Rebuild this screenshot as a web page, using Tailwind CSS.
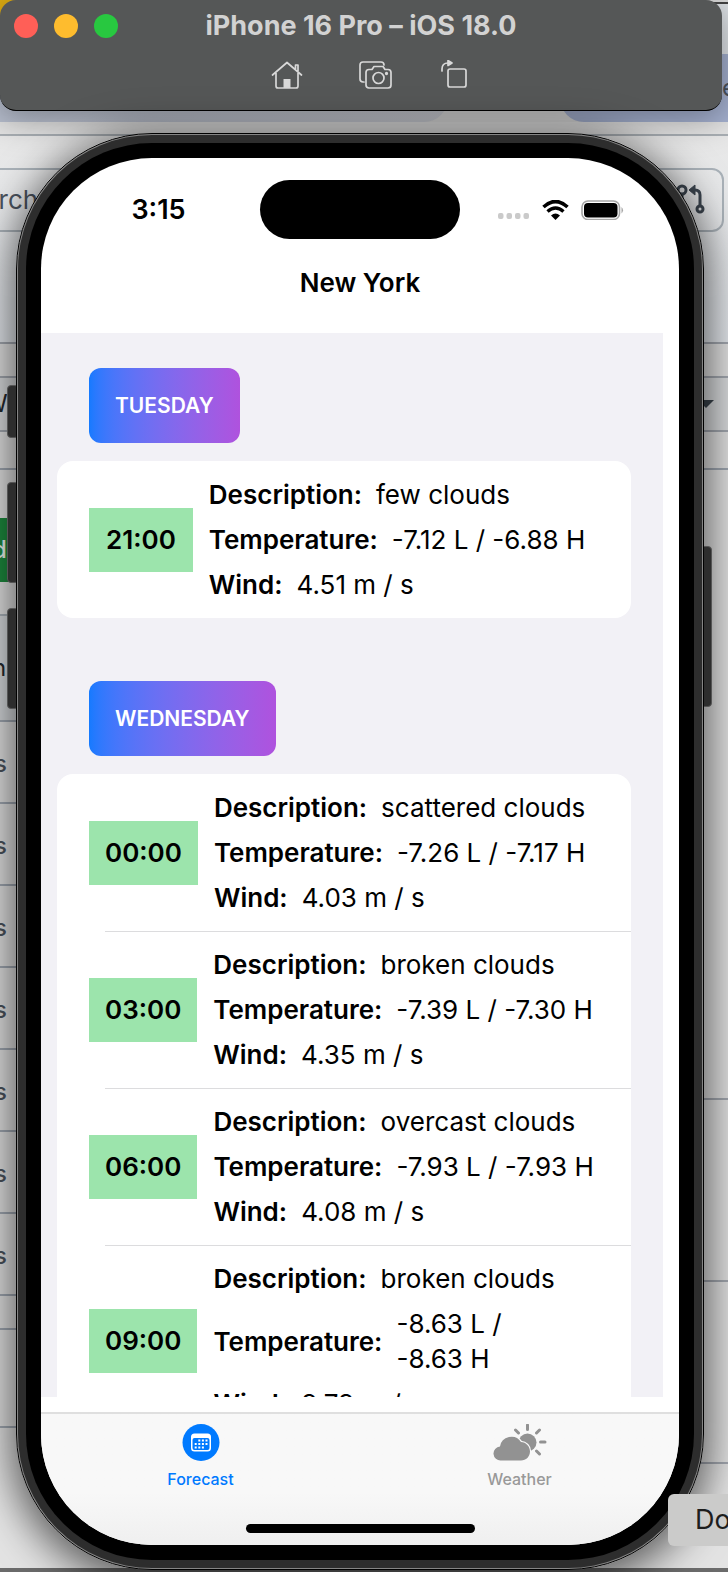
<!DOCTYPE html>
<html lang="en">
<head>
<meta charset="utf-8">
<meta name="viewport" content="width=device-width, initial-scale=1">
<title>iPhone 16 Pro – iOS 18.0</title>
<script src="https://cdn.jsdelivr.net/npm/@tailwindcss/browser@4"></script>
</head>
<body class="bg-[#e3e3e3] font-['Inter','Liberation_Sans',sans-serif] text-black">
<div class="relative isolate flex h-screen flex-col overflow-hidden">

  <!-- Browser page behind the simulator -->
  <div class="absolute inset-0 -z-10 flex flex-col overflow-hidden text-2xl text-[#4b535d]" aria-hidden="true">
    <div class="flex h-[122px] shrink-0 justify-between bg-[#dcdcdc]">
      <div class="h-full w-[448px] rounded-br-3xl bg-[#c3c8d6] bg-linear-to-r from-[#b9c0d0] to-[#cdcfd6]"><div class="size-5 bg-[#e0ae12]"></div></div>
      <div class="flex w-[168px] flex-col">
        <div class="h-1 border-b-2 border-[#444]"></div>
        <div class="h-[50px] bg-[#dfe3e7]"></div>
        <div class="flex grow items-center justify-end rounded-bl-3xl bg-[#a5b1d0]"><span class="-mr-2">e</span></div>
      </div>
    </div>
    <div class="h-[14px] shrink-0 border-b-2 border-[#a9afb4]"></div>
    <div class="flex h-[208px] shrink-0 items-start justify-between border-b-2 border-[#a3a8b0] bg-linear-to-b from-[#e8e8e8] to-[#e3e7ec] pt-8">
      <div class="flex h-16 w-24 items-center border-y-2 border-[#a9b1b8] text-[26px]"><span class="-ml-4">arch</span></div>
      <div class="mr-1 flex h-16 w-20 items-center justify-end rounded-xl border-2 border-[#a9b1b8] pr-4">
        <svg class="h-8 w-9" viewBox="0 0 36 32" fill="none" stroke="#3d4650" stroke-width="3"><circle cx="12" cy="6" r="4"/><path d="M12 10v16M21 6h4q5 0 5 5v10"/><path d="M25 1v10l-6-5z" fill="#3d4650" stroke-width="1"/><circle cx="30" cy="25" r="3"/></svg>
      </div>
    </div>
    <div class="h-[34px] shrink-0 border-b-2 border-[#a3a8b0]"></div>
    <div class="flex h-[54px] shrink-0 items-center justify-between border-b-2 border-[#a3a8b0] bg-[#dadcde] text-[#24282d]"><span class="-ml-4">Wa</span>
      <svg class="mr-3.5 h-2 w-4" viewBox="0 0 16 8"><path d="M0 0h16l-8 8z" fill="#3b444d"/></svg>
    </div>
    <div class="h-[38px] shrink-0 border-b-2 border-[#a0a8b2]"></div>
    <div class="flex grow">
      <div class="flex w-1/2 flex-col">
        <div class="flex h-[146px] shrink-0 flex-col justify-center border-b-2 border-[#a9b1b8] pt-4"><div class="flex h-16 items-center bg-[#1d8a3e] text-2xl font-medium text-[#eef5ef]"><span class="-ml-2">d</span></div></div>
        <div class="flex h-[106px] shrink-0 items-center border-b-2 border-[#a0a8b2] bg-[#d6d9dc] text-[#24282d]"><span class="-ml-2">nr</span></div>
        <div class="flex h-[82px] shrink-0 items-center border-b-2 border-[#a0a8b2] pt-1 font-medium"><span class="-ml-1.5">s</span></div>
        <div class="flex h-[82px] shrink-0 items-center border-b-2 border-[#a0a8b2] pt-1 font-medium"><span class="-ml-1.5">s</span></div>
        <div class="flex h-[82px] shrink-0 items-center border-b-2 border-[#a0a8b2] pt-1 font-medium"><span class="-ml-1.5">s</span></div>
        <div class="flex h-[82px] shrink-0 items-center border-b-2 border-[#a0a8b2] pt-1 font-medium"><span class="-ml-1.5">s</span></div>
        <div class="flex h-[82px] shrink-0 items-center border-b-2 border-[#a0a8b2] pt-1 font-medium"><span class="-ml-1.5">s</span></div>
        <div class="flex h-[82px] shrink-0 items-center border-b-2 border-[#a0a8b2] pt-1 font-medium"><span class="-ml-1.5">s</span></div>
        <div class="flex h-[82px] shrink-0 items-center border-b-2 border-[#a0a8b2] pt-1 font-medium"><span class="-ml-1.5">s</span></div>
        <div class="h-[34px] shrink-0 border-b-2 border-[#a0a8b2]"></div>
        <div class="h-[98px] shrink-0 border-b-2 border-[#a0a8b2]"></div>
      </div>
      <div class="flex w-1/2 flex-col">
        <div class="h-[630px] shrink-0 border-b-2 border-[#a3a8b0]"></div>
        <div class="h-[182px] shrink-0 border-b-2 border-[#a3a8b0]"></div>
        <div class="h-[182px] shrink-0 border-b-2 border-[#a3a8b0]"></div>
      </div>
    </div>
    <div class="h-1 shrink-0 bg-[#6b6b6b]"></div>
  </div>

  <!-- Simulator title bar -->
  <header class="mr-1.5 flex h-[111px] shrink-0 flex-col rounded-2xl border-b border-black bg-[#555757] shadow-[0_6px_36px_2px_rgba(0,0,0,0.35)]">
    <div class="grid h-[52px] grid-cols-[1fr_auto_1fr] items-center">
      <div class="flex gap-4 pl-3.5">
        <button aria-label="Close" class="size-6 rounded-full bg-[#ff5f57]"></button>
        <button aria-label="Minimize" class="size-6 rounded-full bg-[#febc2e]"></button>
        <button aria-label="Zoom" class="size-6 rounded-full bg-[#28c840]"></button>
      </div>
      <h1 class="text-[27px] leading-8 font-bold text-[#d2d2d2]">iPhone 16 Pro – iOS 18.0</h1>
    </div>
    <div class="flex items-center justify-center gap-[46px] pt-2 pl-4 text-[#d8d8d8]">
      <button aria-label="Home" class="mr-2">
        <svg class="h-8 w-[34px]" viewBox="0 0 34 32" fill="none" stroke="currentColor" stroke-width="1.7" stroke-linecap="round" stroke-linejoin="round"><path d="M2.500 15 17 2.500 31.500 15M6 13v13q0 2 2 2h18q2 0 2-2V13M25.500 9V5h2.500v6"/><path d="M13.500 19h7v9h-7z" fill="currentColor" stroke="none"/></svg>
      </button>
      <button aria-label="Screenshot">
        <svg class="h-8 w-9" viewBox="0 0 36 32" fill="none" stroke="currentColor" stroke-width="1.700" stroke-linecap="round" stroke-linejoin="round"><path d="M6 22H5q-3 0-3-3V5q0-3 3-3h18q3 0 3 3"/><path d="M11 9.500h3l2-3h9l2 3h3q3 0 3 3v12.500q0 3-3 3H11q-3 0-3-3V12.500q0-3 3-3z"/><circle cx="20.500" cy="18" r="5.500"/><circle cx="28.500" cy="13.500" r=".8" fill="currentColor"/></svg>
      </button>
      <button aria-label="Rotate">
        <svg class="h-8 w-7" viewBox="0 0 28 32" fill="none" stroke="currentColor" stroke-width="1.700" stroke-linecap="round" stroke-linejoin="round"><rect x="8" y="9" width="18" height="18" rx="2"/><path d="M2 11V9q0-6 6-6h2"/><path d="M8 .5v5l4-2.500z" fill="currentColor"/></svg>
      </button>
    </div>
  </header>

  <!-- Phone -->
  <div class="relative mt-[22px] mr-6 mb-0.5 ml-4 flex min-h-0 grow rounded-[136px] shadow-[0_8px_40px_6px_rgba(0,0,0,0.6)]">
    <div class="absolute top-[252px] -left-[9px] h-[53px] w-3 rounded-sm border border-[#555] bg-[#2d2d2d]"></div>
    <div class="absolute top-[349px] -left-[9px] h-[101px] w-3 rounded-sm border border-[#555] bg-[#2d2d2d]"></div>
    <div class="absolute top-[475px] -left-[9px] h-[101px] w-3 rounded-sm border border-[#555] bg-[#2d2d2d]"></div>
    <div class="absolute top-[413px] -right-2 h-[161px] w-3 rounded-sm border border-[#555] bg-[#2d2d2d]"></div>
    <div class="relative flex min-w-0 grow rounded-[136px] border border-black bg-[#858585] p-px">
      <div class="flex min-w-0 grow rounded-[134px] bg-[#2d2d2d] p-2">
        <div class="flex min-w-0 grow rounded-[126px] bg-black p-[15px]">
          <div class="flex min-w-0 grow flex-col overflow-hidden rounded-[111px] bg-white">

            <div class="grid shrink-0 grid-cols-[1fr_200px_1fr] items-center pt-[22px]">
              <time class="pl-4 text-center text-[27px] leading-8 font-semibold">3:15</time>
              <div class="h-[59px] rounded-full bg-black"></div>
              <div class="flex items-center justify-end gap-3 pr-[55px]">
                <svg class="mt-3 h-1.5 w-8" viewBox="0 0 32 6" fill="#cacaca"><rect x="0" width="5.500" height="6" rx="2"/><rect x="8.500" width="5.500" height="6" rx="2"/><rect x="17" width="5.500" height="6" rx="2"/><rect x="25.500" width="5.500" height="6" rx="2"/></svg>
                <svg class="h-5 w-[27px]" viewBox="0 0 27 20"><path d="M1.500 7Q13.500-4 25.500 7" fill="none" stroke="#000" stroke-width="3.600"/><path d="M5.500 11.500q8-7 16 0" fill="none" stroke="#000" stroke-width="3.400"/><path d="M9 15.500q4.500-4 9 0L13.500 20z"/></svg>
                <svg class="h-5 w-[43px]" viewBox="0 0 43 20"><rect x="1" y="1" width="37.500" height="18.500" rx="6" fill="none" stroke="#a6a6a6" stroke-width="1.600"/><rect x="3" y="3" width="33.500" height="14.500" rx="4"/><path d="M40.500 7q3 3 0 6.500z" fill="#a6a6a6"/></svg>
              </div>
            </div>
            <h2 class="h-[94px] shrink-0 pt-7 text-center text-[26px] leading-8 font-semibold">New York</h2>

            <main class="mr-4 mb-[15px] min-h-0 grow overflow-hidden bg-[#f2f1f6] pt-[35px] pr-8 pl-4">
              <section class="pb-[63px]">
                <h3 class="ml-8 inline-flex h-[75px] items-center rounded-xl bg-linear-to-r from-[#147aff] to-[#af52de] px-[26px] text-[21px] font-semibold text-white">TUESDAY</h3>
                <ul class="mt-[18px] overflow-hidden rounded-2xl bg-white text-[26px] leading-[35px] whitespace-nowrap">
                  <li class="flex items-center gap-4 py-4 pl-8">
                    <time class="bg-[#9ce4ac] px-[17px] py-[14px] leading-9 font-semibold">21:00</time>
                    <dl class="flex flex-col gap-2.5">
                      <div class="flex gap-3.5"><dt class="font-semibold">Description:</dt><dd>few clouds</dd></div>
                      <div class="flex gap-3.5"><dt class="font-semibold">Temperature:</dt><dd>-7.12 L / -6.88 H</dd></div>
                      <div class="flex gap-3.5"><dt class="font-semibold">Wind:</dt><dd>4.51 m / s</dd></div>
                    </dl>
                  </li>
                </ul>
              </section>
              <section>
                <h3 class="ml-8 inline-flex h-[75px] items-center rounded-xl bg-linear-to-r from-[#147aff] to-[#af52de] px-[26px] text-[21px] font-semibold text-white">WEDNESDAY</h3>
                <ul class="mt-[18px] overflow-hidden rounded-2xl bg-white text-[26px] leading-[35px] whitespace-nowrap">
                  <li class="flex items-center gap-4 py-4 pl-8">
                    <time class="bg-[#9ce4ac] px-4 py-[14px] leading-9 font-semibold">00:00</time>
                    <dl class="flex flex-col gap-2.5">
                      <div class="flex gap-3.5"><dt class="font-semibold">Description:</dt><dd>scattered clouds</dd></div>
                      <div class="flex gap-3.5"><dt class="font-semibold">Temperature:</dt><dd>-7.26 L / -7.17 H</dd></div>
                      <div class="flex gap-3.5"><dt class="font-semibold">Wind:</dt><dd>4.03 m / s</dd></div>
                    </dl>
                  </li>
                  <li class="ml-12 h-px bg-[#dcdcde]" role="separator"></li>
                  <li class="flex items-center gap-4 pt-[15px] pb-4 pl-8">
                    <time class="bg-[#9ce4ac] px-4 py-[14px] leading-9 font-semibold">03:00</time>
                    <dl class="flex flex-col gap-2.5">
                      <div class="flex gap-3.5"><dt class="font-semibold">Description:</dt><dd>broken clouds</dd></div>
                      <div class="flex gap-3.5"><dt class="font-semibold">Temperature:</dt><dd>-7.39 L / -7.30 H</dd></div>
                      <div class="flex gap-3.5"><dt class="font-semibold">Wind:</dt><dd>4.35 m / s</dd></div>
                    </dl>
                  </li>
                  <li class="ml-12 h-px bg-[#dcdcde]" role="separator"></li>
                  <li class="flex items-center gap-4 pt-[15px] pb-4 pl-8">
                    <time class="bg-[#9ce4ac] px-4 py-[14px] leading-9 font-semibold">06:00</time>
                    <dl class="flex flex-col gap-2.5">
                      <div class="flex gap-3.5"><dt class="font-semibold">Description:</dt><dd>overcast clouds</dd></div>
                      <div class="flex gap-3.5"><dt class="font-semibold">Temperature:</dt><dd>-7.93 L / -7.93 H</dd></div>
                      <div class="flex gap-3.5"><dt class="font-semibold">Wind:</dt><dd>4.08 m / s</dd></div>
                    </dl>
                  </li>
                  <li class="ml-12 h-px bg-[#dcdcde]" role="separator"></li>
                  <li class="flex items-center gap-4 pt-[15px] pb-4 pl-8">
                    <time class="bg-[#9ce4ac] px-4 py-[14px] leading-9 font-semibold">09:00</time>
                    <dl class="flex flex-col gap-2.5">
                      <div class="flex gap-3.5"><dt class="font-semibold">Description:</dt><dd>broken clouds</dd></div>
                      <div class="flex items-center gap-3.5"><dt class="font-semibold">Temperature:</dt><dd>-8.63 L /<br>-8.63 H</dd></div>
                      <div class="flex gap-3.5"><dt class="font-semibold">Wind:</dt><dd>3.73 m / s</dd></div>
                    </dl>
                  </li>
                </ul>
              </section>
            </main>

            <footer class="flex h-[133px] shrink-0 flex-col items-center justify-between border-t-2 border-[#dfdfdf] bg-linear-to-b from-[#f8f8f8] from-60% to-[#efefef] pb-3">
              <nav class="grid w-full grid-cols-2 pt-2.5 text-base leading-5 font-medium">
                <button class="flex flex-col items-center gap-2 text-[#007aff]">
                  <svg class="h-[37px] w-[54px]" viewBox="0 0 54 37"><circle cx="27" cy="18.500" r="18.500" fill="currentColor"/><rect x="17" y="9.500" width="20" height="18" rx="3.500" fill="#fff"/><rect x="18.500" y="14" width="17" height="12" rx="2" fill="currentColor"/><path d="M24.300 16.500h9.200M20.700 20h12.800M20.700 23.500h9.200" stroke="#fff" stroke-width="2" stroke-dasharray="2 1.600"/></svg>
                  <span>Forecast</span>
                </button>
                <button class="flex flex-col items-center gap-2 text-[#999]">
                  <svg class="h-[37px] w-[54px]" viewBox="0 0 54 37" fill="#929292"><circle cx="34.500" cy="18.500" r="9"/><path d="M34.500 2v4.500M43.500 10l3-3M47.500 19h4.500M43.500 28l3 3M25.500 10l-3-3" transform="translate(0 -1)" stroke="#929292" stroke-width="3" stroke-linecap="round"/><path d="M8 36.500a7 7 0 0 1-1-14 11.500 11.500 0 0 1 21-4.500c5 .2 9 4.500 9 9.500s-4 9-9 9z" stroke="#f8f8f8" stroke-width="2.500" paint-order="stroke"/></svg>
                  <span>Weather</span>
                </button>
              </nav>
              <div class="h-[9px] w-[229px] rounded-full bg-black"></div>
            </footer>
          </div>
        </div>
      </div>
    </div>
  </div>

  <!-- Button of a window that overlaps the phone -->
  <button class="absolute right-0 bottom-[26px] h-[52px] w-[60px] overflow-hidden rounded-l-md bg-[#cbcbca] pl-[27px] text-left text-[27px] text-[#1d1d1d]">Do</button>
</div>
</body>
</html>
